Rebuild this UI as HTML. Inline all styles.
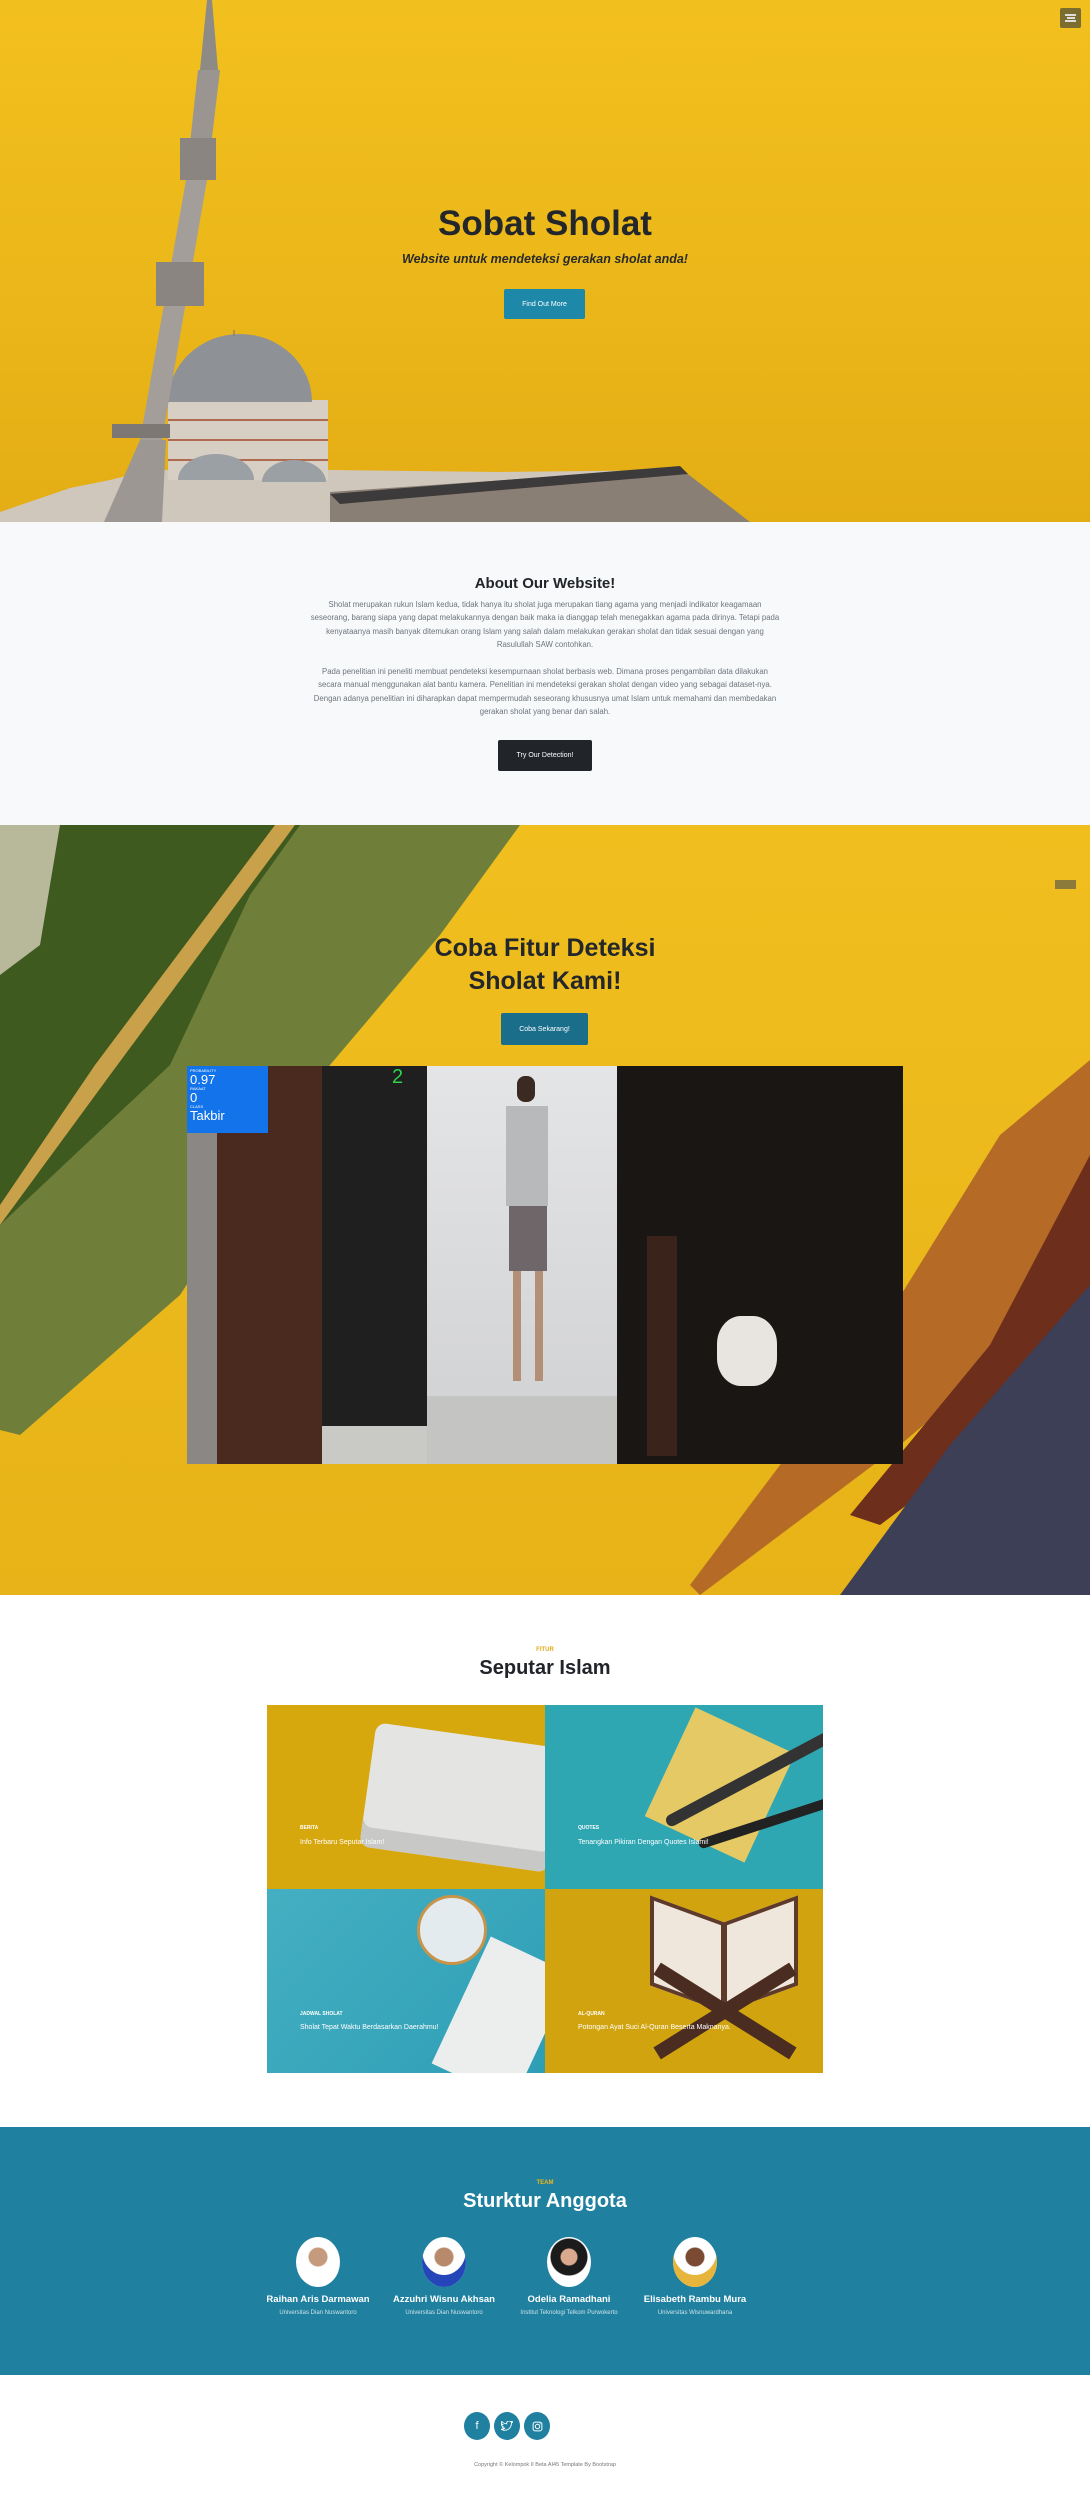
<!DOCTYPE html>
<html><head><meta charset="utf-8"><style>
*{margin:0;padding:0;box-sizing:border-box}
body{width:1090px;height:2507px;font-family:"Liberation Sans","DejaVu Sans",sans-serif;background:#fff;position:relative;overflow:hidden;color:#212529}
.abs{position:absolute}
.c{text-align:center}
.btn{position:absolute;color:#fff;font-size:7px;display:flex;align-items:center;justify-content:center;border-radius:2px}
</style></head><body>

<!-- HERO -->
<div class="abs" style="left:0;top:0;width:1090px;height:522px;background:linear-gradient(180deg,#f2c01e 0%,#eab619 60%,#e3ad14 100%);overflow:hidden">
<svg class="abs" style="left:0;top:0" width="1090" height="522">
 <!-- mosque body -->
 <polygon points="0,512 70,488 110,480 150,470 330,470 500,472 680,470 750,522 0,522" fill="#cfc7bb"/>
 <polygon points="330,492 680,468 750,522 330,522" fill="#8a7f74"/>
 <polygon points="330,494 680,466 688,474 340,504" fill="#3c3a3a"/>
 <rect x="168" y="400" width="160" height="80" fill="#d8cfc4"/>
 <g stroke="#b06a4e" stroke-width="2"><line x1="168" y1="420" x2="328" y2="420"/><line x1="168" y1="440" x2="328" y2="440"/><line x1="168" y1="460" x2="328" y2="460"/></g>
 <path d="M168,402 A72,68 0 0 1 312,402 Z" fill="#8e9296"/>
 <path d="M178,480 A38,26 0 0 1 254,480 Z" fill="#9aa0a4"/>
 <path d="M262,482 A32,22 0 0 1 326,482 Z" fill="#9aa0a4"/>
 <line x1="234" y1="330" x2="234" y2="336" stroke="#777" stroke-width="1"/>
 <!-- minaret -->
 <polygon points="207,0 212,0 218,70 200,70" fill="#8e8a86"/>
 <polygon points="198,70 220,70 207,180 186,180" fill="#9a9590"/>
 <rect x="180" y="138" width="36" height="42" fill="#8a8580"/>
 <polygon points="186,180 207,180 162,440 140,440" fill="#a39e99"/>
 <rect x="156" y="262" width="48" height="44" fill="#8a8580"/>
 <polygon points="140,440 166,440 162,522 104,522" fill="#9c9792"/>
 <rect x="112" y="424" width="58" height="14" fill="#7d7873"/>
</svg>
<div class="abs" style="left:1060px;top:8px;width:21px;height:20px;background:#7a6d2e;border-radius:2px"></div>
<div class="abs" style="left:1065px;top:14px;width:11px;height:8px;border-top:2px solid #ddd;border-bottom:2px solid #ddd"></div>
<div class="abs" style="left:1067px;top:17px;width:8px;height:2px;background:#ddd"></div>
<div class="abs c" style="left:345px;width:400px;top:204px;font-size:35px;font-weight:bold;color:#23272b">Sobat Sholat</div>
<div class="abs c" style="left:345px;width:400px;top:252px;font-size:12.5px;font-weight:bold;font-style:italic;color:#2a2a28">Website untuk mendeteksi gerakan sholat anda!</div>
<div class="btn" style="left:504px;top:289px;width:81px;height:30px;background:#1e88a8">Find Out More</div>
</div>

<!-- ABOUT -->
<div class="abs" style="left:0;top:522px;width:1090px;height:303px;background:#f8f9fa">
<div class="abs c" style="left:0;width:1090px;top:53px;font-size:15px;font-weight:bold">About Our Website!</div>
<div class="abs c" style="left:310px;width:470px;top:76px;font-size:7.8px;line-height:13.4px;color:#6c757d">Sholat merupakan rukun Islam kedua, tidak hanya itu sholat juga merupakan tiang agama yang menjadi indikator keagamaan seseorang, barang siapa yang dapat melakukannya dengan baik maka ia dianggap telah menegakkan agama pada dirinya. Tetapi pada kenyataanya masih banyak ditemukan orang Islam yang salah dalam melakukan gerakan sholat dan tidak sesuai dengan yang Rasulullah SAW contohkan.<br><br>Pada penelitian ini peneliti membuat pendeteksi kesempurnaan sholat berbasis web. Dimana proses pengambilan data dilakukan secara manual menggunakan alat bantu kamera. Penelitian ini mendeteksi gerakan sholat dengan video yang sebagai dataset-nya. Dengan adanya penelitian ini diharapkan dapat mempermudah seseorang khususnya umat Islam untuk memahami dan membedakan gerakan sholat yang benar dan salah.</div>
<div class="btn" style="left:498px;top:218px;width:94px;height:31px;background:#212529">Try Our Detection!</div>
</div>

<!-- DETECTION -->
<div class="abs" style="left:0;top:825px;width:1090px;height:770px;background:linear-gradient(180deg,#f0bf1e,#e7b318);overflow:hidden">
<svg class="abs" style="left:0;top:0" width="1090" height="770">
 <polygon points="0,0 520,0 440,110 330,240 180,470 20,610 0,605" fill="#6f7f3a"/>
 <polygon points="0,0 300,0 250,70 170,240 0,400" fill="#3f5a1e"/>
 <polygon points="0,0 60,0 40,120 0,150" fill="#b8b89a"/>
 <polygon points="275,0 295,0 110,250 0,400 0,380 95,240" fill="#c9a14a"/>
 <polygon points="1090,235 1090,460 900,620 700,770 690,760 870,520 1000,310" fill="#b56a26"/>
 <polygon points="1090,330 1090,520 960,640 880,700 850,690 990,520" fill="#6d2e1c"/>
 <polygon points="1090,460 1090,770 840,770 950,620" fill="#3c3f55"/>
 <rect x="1055" y="55" width="21" height="9" fill="#8b7a3a"/>
</svg>
<div class="abs c" style="left:345px;width:400px;top:107px;font-size:25px;line-height:33px;font-weight:bold;color:#23272b">Coba Fitur Deteksi<br>Sholat Kami!</div>
<div class="btn" style="left:501px;top:188px;width:87px;height:32px;background:#1a6e8a">Coba Sekarang!</div>
<!-- video -->
<div class="abs" style="left:187px;top:241px;width:716px;height:398px;background:#c9c9c6;overflow:hidden">
 <div class="abs" style="left:0;top:0;width:135px;height:398px;background:#8a8785"></div>
 <div class="abs" style="left:30px;top:0;width:105px;height:398px;background:#4a2a1e"></div>
 <div class="abs" style="left:135px;top:0;width:105px;height:360px;background:#1f1f20"></div>
 <div class="abs" style="left:240px;top:0;width:220px;height:398px;background:linear-gradient(180deg,#e4e5e7,#cfd0d2)"></div>
 <div class="abs" style="left:240px;top:330px;width:460px;height:68px;background:#c4c4c2"></div>
 <div class="abs" style="left:430px;top:0;width:286px;height:398px;background:#1a1614"></div>
 <div class="abs" style="left:460px;top:170px;width:30px;height:220px;background:#3a231b"></div>
 <div class="abs" style="left:530px;top:250px;width:60px;height:70px;background:#e8e4df;border-radius:40%"></div>
 <div class="abs" style="left:310px;top:10px;width:60px;height:320px">
  <div class="abs" style="left:20px;top:0;width:18px;height:26px;background:#3b2a22;border-radius:8px"></div>
  <div class="abs" style="left:9px;top:30px;width:42px;height:100px;background:#b7b9bb"></div>
  <div class="abs" style="left:12px;top:130px;width:38px;height:65px;background:#6f666a"></div>
  <div class="abs" style="left:16px;top:195px;width:8px;height:110px;background:#b48f77"></div>
  <div class="abs" style="left:38px;top:195px;width:8px;height:110px;background:#b48f77"></div>
 </div>
 <div class="abs" style="left:0;top:0;width:81px;height:67px;background:#1273ea;color:#fff;font-size:4px;padding:2px 3px;line-height:5px">PROBABILITY<div style="font-size:13px;line-height:13px">0.97</div>RAKAAT<div style="font-size:13px;line-height:13px">0</div>CLASS<div style="font-size:13px;line-height:14px">Takbir</div></div>
 <div class="abs" style="left:205px;top:0;color:#2dd24a;font-size:20px">2</div>
</div>
</div>

<!-- SEPUTAR -->
<div class="abs c" style="left:0;width:1090px;top:1647px;font-size:6px;font-weight:bold;color:#e3a91a">FITUR</div>
<div class="abs c" style="left:0;width:1090px;top:1657px;font-size:20px;font-weight:bold">Seputar Islam</div>
<div class="abs" style="left:267px;top:1705px;width:278px;height:184px;background:#d6a80e;overflow:hidden">
 <div class="abs" style="left:100px;top:30px;width:190px;height:125px;background:#e4e4e2;transform:rotate(8deg);border-radius:10px;box-shadow:inset 0 -20px 0 #c8c8c6"></div>
 <div class="abs" style="left:33px;top:120px;color:#fff;font-size:5px;font-weight:bold">BERITA</div>
 <div class="abs" style="left:33px;top:134px;color:#fff;font-size:7px">Info Terbaru Seputar Islam!</div>
</div>
<div class="abs" style="left:545px;top:1705px;width:278px;height:184px;background:#2fa7b3;overflow:hidden">
 <div class="abs" style="left:120px;top:20px;width:110px;height:120px;background:#e5c965;transform:rotate(25deg)"></div>
 <div class="abs" style="left:110px;top:65px;width:200px;height:12px;background:#333;transform:rotate(-28deg);border-radius:6px"></div>
 <div class="abs" style="left:150px;top:110px;width:160px;height:10px;background:#222;transform:rotate(-18deg);border-radius:5px"></div>
 <div class="abs" style="left:33px;top:120px;color:#fff;font-size:5px;font-weight:bold">QUOTES</div>
 <div class="abs" style="left:33px;top:134px;color:#fff;font-size:7px">Tenangkan Pikiran Dengan Quotes Islami!</div>
</div>
<div class="abs" style="left:267px;top:1889px;width:278px;height:184px;background:linear-gradient(135deg,#45afc2,#2e9eb5);overflow:hidden">
 <div class="abs" style="left:150px;top:6px;width:70px;height:70px;border-radius:50%;background:#e3ebef;border:3px solid #c7944a"></div>
 <div class="abs" style="left:190px;top:60px;width:90px;height:140px;background:#eceeee;transform:rotate(25deg)"></div>
 <div class="abs" style="left:33px;top:122px;color:#fff;font-size:5px;font-weight:bold">JADWAL SHOLAT</div>
 <div class="abs" style="left:33px;top:135px;color:#fff;font-size:7px">Sholat Tepat Waktu Berdasarkan Daerahmu!</div>
</div>
<div class="abs" style="left:545px;top:1889px;width:278px;height:184px;background:#d1a40f;overflow:hidden">
 <div class="abs" style="left:105px;top:20px;width:75px;height:90px;background:#efe7dc;transform:skewY(20deg);border:4px solid #5e3a2a"></div>
 <div class="abs" style="left:178px;top:20px;width:75px;height:90px;background:#efe7dc;transform:skewY(-20deg);border:4px solid #5e3a2a"></div>
 <div class="abs" style="left:100px;top:115px;width:160px;height:14px;background:#4a2c20;transform:rotate(32deg)"></div>
 <div class="abs" style="left:100px;top:115px;width:160px;height:14px;background:#4a2c20;transform:rotate(-32deg)"></div>
 <div class="abs" style="left:33px;top:122px;color:#fff;font-size:5px;font-weight:bold">AL-QURAN</div>
 <div class="abs" style="left:33px;top:135px;color:#fff;font-size:7px">Potongan Ayat Suci Al-Quran Beserta Maknanya.</div>
</div>

<!-- TEAM -->
<div class="abs" style="left:0;top:2127px;width:1090px;height:248px;background:#1f809f;color:#fff">
 <div class="abs c" style="left:0;width:1090px;top:53px;font-size:6px;font-weight:bold;color:#f0b51a">TEAM</div>
 <div class="abs c" style="left:0;width:1090px;top:63px;font-size:20px;font-weight:bold">Sturktur Anggota</div>
 <div class="abs" style="left:296px;top:110px;width:44px;height:50px;border-radius:50%;background:radial-gradient(circle at 50% 40%,#c69a7c 0 9px,#fff 10px)"></div>
 <div class="abs" style="left:422px;top:110px;width:44px;height:50px;border-radius:50%;background:radial-gradient(circle at 50% 40%,#b88a6c 0 9px,#fff 10px);box-shadow:inset 0 -12px 0 #2546b8"></div>
 <div class="abs" style="left:547px;top:110px;width:44px;height:50px;border-radius:50%;background:radial-gradient(circle at 50% 40%,#d9a98e 0 8px,#1b1b1b 9px 18px,#fff 19px)"></div>
 <div class="abs" style="left:673px;top:110px;width:44px;height:50px;border-radius:50%;background:radial-gradient(circle at 50% 40%,#7a4a32 0 9px,#fff 10px);box-shadow:inset 0 -12px 0 #e7b53c"></div>
 <div class="abs c" style="left:218px;width:200px;top:167px;font-size:9.5px;font-weight:bold">Raihan Aris Darmawan</div>
 <div class="abs c" style="left:344px;width:200px;top:167px;font-size:9.5px;font-weight:bold">Azzuhri Wisnu Akhsan</div>
 <div class="abs c" style="left:469px;width:200px;top:167px;font-size:9.5px;font-weight:bold">Odelia Ramadhani</div>
 <div class="abs c" style="left:595px;width:200px;top:167px;font-size:9.5px;font-weight:bold">Elisabeth Rambu Mura</div>
 <div class="abs c" style="left:218px;width:200px;top:183px;font-size:6px;color:#cfe3ea">Universitas Dian Nuswantoro</div>
 <div class="abs c" style="left:344px;width:200px;top:183px;font-size:6px;color:#cfe3ea">Universitas Dian Nuswantoro</div>
 <div class="abs c" style="left:469px;width:200px;top:183px;font-size:6px;color:#cfe3ea">Institut Teknologi Telkom Purwokerto</div>
 <div class="abs c" style="left:595px;width:200px;top:183px;font-size:6px;color:#cfe3ea">Universitas Wisnuwardhana</div>
</div>

<!-- FOOTER -->
<div class="abs" style="left:464px;top:2412px;width:26px;height:28px;border-radius:50%;background:#1f809f;color:#fff;font-size:11px;display:flex;align-items:center;justify-content:center">f</div>
<div class="abs" style="left:494px;top:2412px;width:26px;height:28px;border-radius:50%;background:#1f809f;display:flex;align-items:center;justify-content:center"><svg width="12" height="10" viewBox="0 0 24 20"><path d="M23 2a9 9 0 0 1-2.7.8A4.7 4.7 0 0 0 22.4.2a9 9 0 0 1-3 1.1A4.7 4.7 0 0 0 11.4 5.6 13.4 13.4 0 0 1 1.600.7a4.7 4.7 0 0 0 1.5 6.3A4.7 4.7 0 0 1 1 6.4a4.7 4.7 0 0 0 3.8 4.7 4.7 4.7 0 0 1-2.1.1 4.7 4.7 0 0 0 4.4 3.3A9.5 9.5 0 0 1 0 16.4 13.4 13.4 0 0 0 7.3 18.5c8.7 0 13.5-7.2 13.5-13.5v-.6A9.6 9.6 0 0 0 23 2z" fill="none" stroke="#fff" stroke-width="1.8"/></svg></div>
<div class="abs" style="left:524px;top:2412px;width:26px;height:28px;border-radius:50%;background:#1f809f;display:flex;align-items:center;justify-content:center"><svg width="11" height="11" viewBox="0 0 20 20"><rect x="2" y="2" width="16" height="16" rx="4" fill="none" stroke="#fff" stroke-width="1.8"/><circle cx="10" cy="10" r="4" fill="none" stroke="#fff" stroke-width="1.8"/><circle cx="14.8" cy="5.2" r="1" fill="#fff"/></svg></div>
<div class="abs c" style="left:0;width:1090px;top:2462px;font-size:5.5px;color:#777">Copyright © Kelompok II Beta AI45 Template By Bootstrap</div>
</body></html>
